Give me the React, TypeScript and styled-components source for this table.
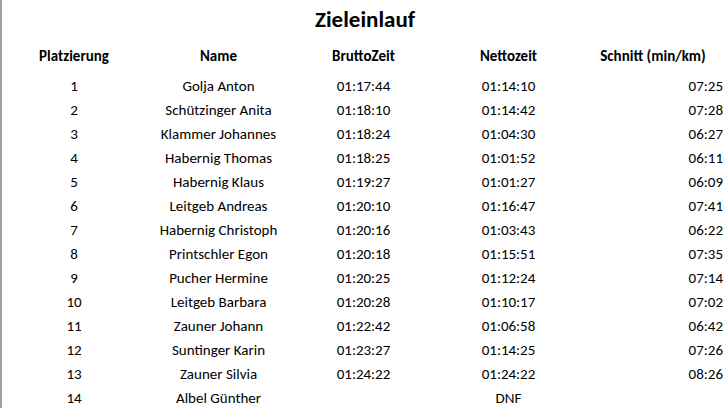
import React from "react"
import styled, { createGlobalStyle } from 'styled-components'

const GlobalStyle = createGlobalStyle`
    html, body {
        margin: 0;
        padding: 0;
        background: #fff;
    }
    body {
        font-family: Calibri, Carlito, Lato, "Liberation Sans", sans-serif;
        color: #000;
    }
`

const Sheet = styled.div`
    width: 728px;
    height: 408px;
    box-sizing: border-box;
    border-left: 2px solid #a0a0a0;
    overflow: hidden;
`

const Title = styled.h1`
    margin: 4px 0 0;
    height: 30px;
    line-height: 30px;
    font-size: 23px;
    font-weight: 700;
    text-align: center;
`

const Table = styled.div`
    margin-top: 10px;
    display: grid;
    grid-template-columns: 144px 145px 145px 145px 1fr;
    grid-template-rows: 30px;
    grid-auto-rows: 24px;
    font-size: 15px;
    line-height: 24px;
`

const HeadCell = styled.div<{ $padRight?: number }>`
    font-weight: 700;
    text-align: center;
    padding-right: ${p => p.$padRight ?? 0}px;
    white-space: nowrap;
`

const Cell = styled.div<{ $align?: 'center' | 'right' }>`
    text-align: ${p => p.$align ?? 'center'};
    padding-right: ${p => (p.$align === 'right' ? 5 : 0)}px;
    white-space: nowrap;
`

interface IResult {
    place: number
    name: string
    brutto: string
    netto: string
    schnitt: string
}

const results: IResult[] = [
    { place: 1, name: 'Golja Anton', brutto: '01:17:44', netto: '01:14:10', schnitt: '07:25' },
    { place: 2, name: 'Schützinger Anita', brutto: '01:18:10', netto: '01:14:42', schnitt: '07:28' },
    { place: 3, name: 'Klammer Johannes', brutto: '01:18:24', netto: '01:04:30', schnitt: '06:27' },
    { place: 4, name: 'Habernig Thomas', brutto: '01:18:25', netto: '01:01:52', schnitt: '06:11' },
    { place: 5, name: 'Habernig Klaus', brutto: '01:19:27', netto: '01:01:27', schnitt: '06:09' },
    { place: 6, name: 'Leitgeb Andreas', brutto: '01:20:10', netto: '01:16:47', schnitt: '07:41' },
    { place: 7, name: 'Habernig Christoph', brutto: '01:20:16', netto: '01:03:43', schnitt: '06:22' },
    { place: 8, name: 'Printschler Egon', brutto: '01:20:18', netto: '01:15:51', schnitt: '07:35' },
    { place: 9, name: 'Pucher Hermine', brutto: '01:20:25', netto: '01:12:24', schnitt: '07:14' },
    { place: 10, name: 'Leitgeb Barbara', brutto: '01:20:28', netto: '01:10:17', schnitt: '07:02' },
    { place: 11, name: 'Zauner Johann', brutto: '01:22:42', netto: '01:06:58', schnitt: '06:42' },
    { place: 12, name: 'Suntinger Karin', brutto: '01:23:27', netto: '01:14:25', schnitt: '07:26' },
    { place: 13, name: 'Zauner Silvia', brutto: '01:24:22', netto: '01:24:22', schnitt: '08:26' },
    { place: 14, name: 'Albel Günther', brutto: '', netto: 'DNF', schnitt: '' },
]

const App: React.FunctionComponent = () => {
    return (
        <>
            <GlobalStyle />
            <Sheet>
                <Title>Zieleinlauf</Title>
                <Table>
                    <HeadCell>Platzierung</HeadCell>
                    <HeadCell>Name</HeadCell>
                    <HeadCell>BruttoZeit</HeadCell>
                    <HeadCell>Nettozeit</HeadCell>
                    <HeadCell $padRight={3}>Schnitt (min/km)</HeadCell>
                    {results.map(r => (
                        <React.Fragment key={r.place}>
                            <Cell>{r.place}</Cell>
                            <Cell>{r.name}</Cell>
                            <Cell>{r.brutto}</Cell>
                            <Cell>{r.netto}</Cell>
                            <Cell $align='right'>{r.schnitt}</Cell>
                        </React.Fragment>
                    ))}
                </Table>
            </Sheet>
        </>
    )
}

export default App
